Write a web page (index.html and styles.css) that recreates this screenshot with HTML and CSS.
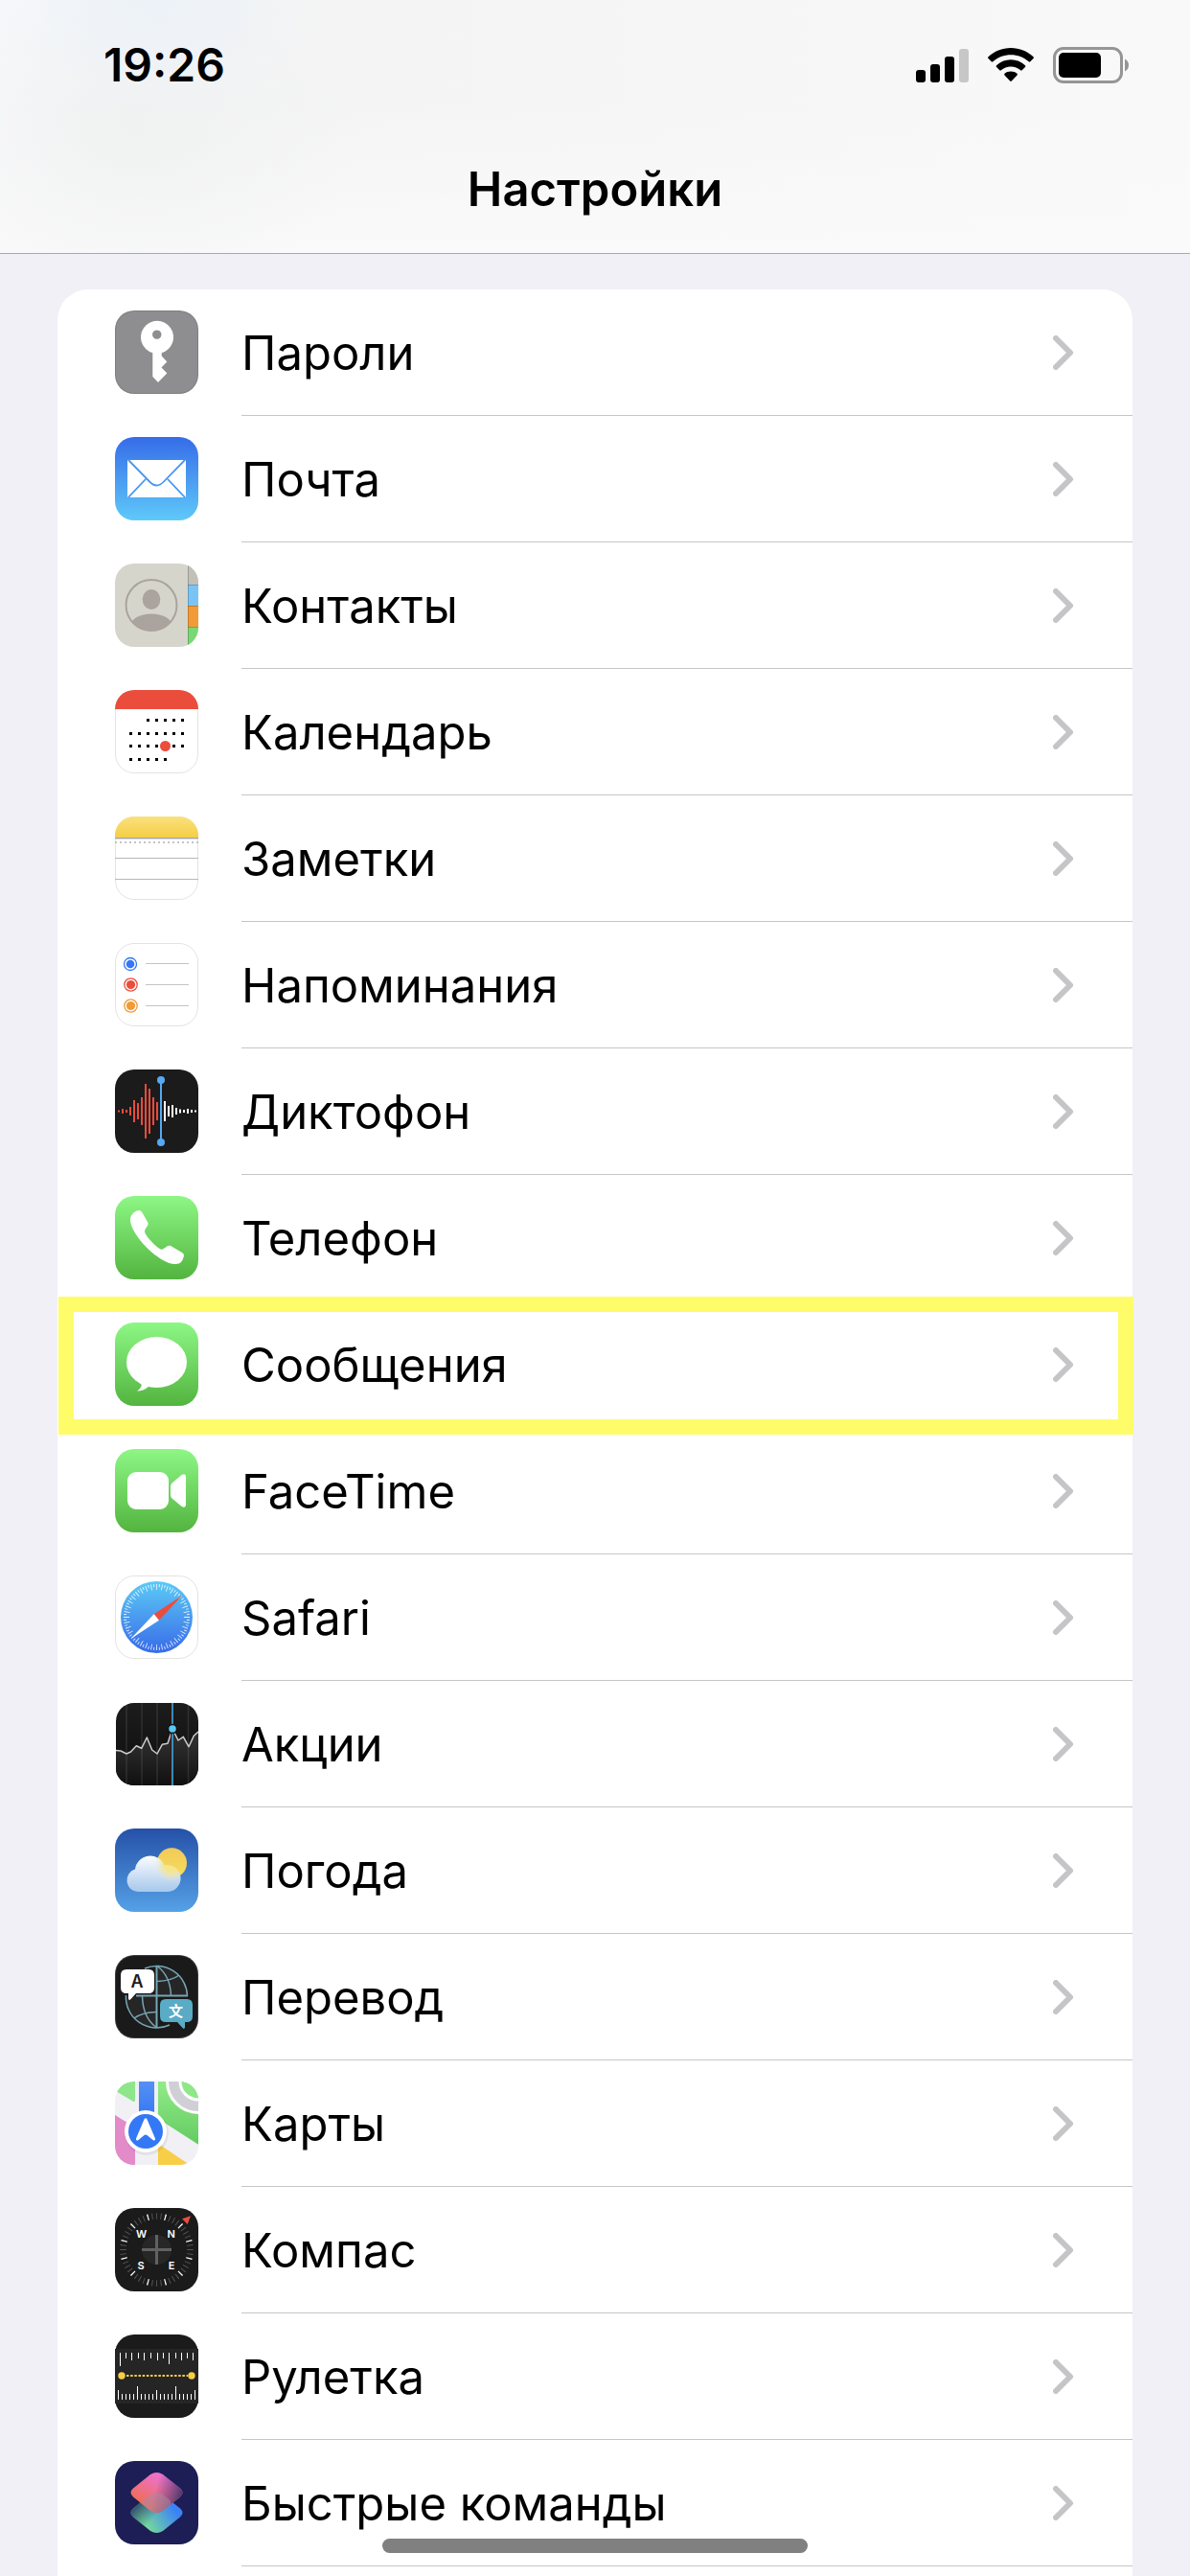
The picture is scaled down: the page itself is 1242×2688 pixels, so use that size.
FILE: index.html
```html
<!DOCTYPE html>
<html lang="ru">
<head>
<meta charset="utf-8">
<meta name="viewport" content="width=device-width, initial-scale=1">
<title>Настройки</title>
<link rel="stylesheet" href="styles.css">
</head>
<body>
<svg class="defs" aria-hidden="true">
  <defs>
    <linearGradient id="green" x2="0" y2="1"><stop stop-color="#8df785"/><stop offset="1" stop-color="#53b43f"/></linearGradient>
    <linearGradient id="mail" x2="0" y2="1"><stop stop-color="#366ce9"/><stop offset="1" stop-color="#5fc9f9"/></linearGradient>
    <linearGradient id="safari" x2="0" y2="1"><stop stop-color="#5ccaf6"/><stop offset="1" stop-color="#386be8"/></linearGradient>
    <linearGradient id="notes" x2="0" y2="1"><stop stop-color="#f9e17d"/><stop offset="1" stop-color="#f6ce45"/></linearGradient>
    <linearGradient id="stocks" x2="0" y2="1"><stop stop-color="#1c1c1c"/><stop offset="1" stop-color="#0d0d0d"/></linearGradient>
    <linearGradient id="stocks-area" x2="0" y2="1"><stop stop-color="#363636"/><stop offset="1" stop-color="#101010"/></linearGradient>
    <linearGradient id="sky" x2="0" y2="1"><stop stop-color="#2551a8"/><stop offset="1" stop-color="#55a1e6"/></linearGradient>
    <linearGradient id="sun" x2="0" y2="1"><stop stop-color="#f2c95a"/><stop offset="1" stop-color="#f6df5b"/></linearGradient>
    <linearGradient id="cloud" x2="0" y2="1"><stop stop-color="#fbfcff"/><stop offset="1" stop-color="#a7c8ec"/></linearGradient>
    <radialGradient id="glow" gradientUnits="userSpaceOnUse" cx="59" cy="38" r="18"><stop offset=".4" stop-color="#f5e58c"/><stop offset="1" stop-color="#e9e9c8" stop-opacity="0"/></radialGradient>
    <linearGradient id="park" x2="0" y2="1"><stop stop-color="#91ec88"/><stop offset="1" stop-color="#64cb62"/></linearGradient>
    <linearGradient id="road" x2="0" y2="1"><stop stop-color="#5590f3"/><stop offset="1" stop-color="#3376f5"/></linearGradient>
    <linearGradient id="short-a" gradientUnits="userSpaceOnUse" x1="30" y1="48" x2="50" y2="10"><stop stop-color="#ee6d50"/><stop offset="1" stop-color="#ee72e0"/></linearGradient>
    <linearGradient id="short-a2" gradientUnits="userSpaceOnUse" x1="42" y1="30" x2="70" y2="38"><stop stop-color="#5b3e75" stop-opacity="0"/><stop offset="1" stop-color="#4b3568"/></linearGradient>
    <linearGradient id="short-b" gradientUnits="userSpaceOnUse" x1="34" y1="68" x2="62" y2="50"><stop stop-color="#72d69f"/><stop offset="1" stop-color="#3b82f6"/></linearGradient>
    <linearGradient id="short-b2" gradientUnits="userSpaceOnUse" x1="20" y1="46" x2="38" y2="62"><stop stop-color="#2f4669"/><stop offset="1" stop-color="#2f4669" stop-opacity="0"/></linearGradient>
    <clipPath id="tile"><rect width="87" height="87" rx="20"/></clipPath>
    <clipPath id="avatar"><circle cx="38" cy="43.500" r="27"/></clipPath>
    <symbol id="chevron" viewBox="0 0 22 36"><path d="M3 3l15 15L3 33" fill="none" stroke="#c5c5c7" stroke-width="6" stroke-linecap="round" stroke-linejoin="round"/></symbol>
  </defs>
</svg>

<header class="header">
  <div class="status">
    <time class="clock">19:26</time>
    <div class="indicators">
      <svg width="55" height="35" viewBox="0 0 55 35" role="img" aria-label="Сигнал сети"><rect y="22" width="10" height="13" rx="3"/><rect x="15" y="16" width="10" height="19" rx="3"/><rect x="30" y="8" width="10" height="27" rx="3"/><rect x="45" width="10" height="35" rx="3" fill="#c7c7c7"/></svg>
      <svg width="48" height="36" viewBox="0 0 48 36" role="img" aria-label="Wi-Fi"><path d="M24 0C33 0 41.500 3.500 47.500 9.300Q48.300 10.200 47.500 11L44.300 14.300Q43.500 15 42.700 14.300C37.500 9.700 31 7.200 24 7.200S10.500 9.700 5.300 14.300Q4.500 15 3.700 14.300L.5 11Q-.3 10.200.5 9.300C6.500 3.500 15 0 24 0Z"/><path d="M24 12.300C29.800 12.300 35 14.600 39 18.300Q39.800 19.200 39 20L35.700 23.300Q35 24 34.200 23.300C31.400 21 27.900 19.500 24 19.500S16.600 21 13.800 23.300Q13 24 12.300 23.300L9 20Q8.200 19.200 9 18.300C13 14.600 18.200 12.300 24 12.300Z"/><path d="M24 24.500C26.500 24.500 28.800 25.400 30.500 26.800Q31.400 27.700 30.500 28.500L24.800 34.500Q24 35.300 23.200 34.500L17.500 28.500Q16.600 27.700 17.500 26.800C19.200 25.400 21.500 24.500 24 24.500Z"/></svg>
      <svg width="80" height="38" viewBox="0 0 80 38" role="img" aria-label="Батарея"><rect x="1.500" y="1.500" width="70" height="35" rx="9.500" fill="none" stroke="#959595" stroke-width="3"/><rect x="6" y="6" width="44" height="26" rx="5"/><path d="M75 12.500Q79 14.500 79 19T75 25.500Z" fill="#959595"/></svg>
    </div>
  </div>
  <h1 class="title">Настройки</h1>
</header>

<main class="content">
<ul class="list">
  <li class="row"><a href="#passwords" class="link">
    <svg class="icon" viewBox="0 0 87 87" aria-hidden="true"><rect width="87" height="87" rx="20" fill="#7f7f81"/><rect x="1" y="1" width="85" height="85" rx="19" fill="#8e8e90"/><path fill="#fff" fill-rule="evenodd" d="M39.300 44.200A17 17 0 1 1 48.700 44.200V47.500L54.300 53.500 48.500 59.500 54.300 65.500 45 75 39.300 69ZM43.700 20.400a4.700 4.700 0 1 0 .1 0Z"/></svg>
    <span class="body"><span class="label">Пароли</span><svg class="chevron" aria-hidden="true"><use href="#chevron"/></svg></span></a></li>
  <li class="row"><a href="#mail" class="link">
    <svg class="icon" viewBox="0 0 87 87" aria-hidden="true"><rect width="87" height="87" rx="20" fill="url(#mail)"/><rect x="13" y="24" width="61" height="39" rx="1" fill="#fff"/><path d="M14 24L36 46.500Q43.500 54.500 51 46.500L73 24M14 63L32 44M73 63L55 44" fill="none" stroke="#4798f1" stroke-width="1.800"/></svg>
    <span class="body"><span class="label">Почта</span><svg class="chevron" aria-hidden="true"><use href="#chevron"/></svg></span></a></li>
  <li class="row"><a href="#contacts" class="link">
    <svg class="icon" viewBox="0 0 87 87" aria-hidden="true"><g clip-path="url(#tile)"><rect width="87" height="87" fill="#d6d5cc"/><path fill="#c2c0b8" d="M76 0h11v22H76z"/><path fill="#7ac4f5" d="M76 22h11v22H76z"/><path fill="#f19a37" d="M76 44h11v22H76z"/><path fill="#78d974" d="M76 66h11v21H76z"/><path d="M76 22.500h11M76 44.500h11M76 66.500h11M76.500 0v87" stroke="#000" stroke-opacity=".2"/></g><circle cx="38" cy="43.500" r="26.500" fill="none" stroke="#aba39e" stroke-width="2"/><g fill="#aba39e"><ellipse cx="38" cy="37.500" rx="9.300" ry="10.500"/><ellipse cx="38" cy="64" rx="21" ry="11.500" clip-path="url(#avatar)"/></g></svg>
    <span class="body"><span class="label">Контакты</span><svg class="chevron" aria-hidden="true"><use href="#chevron"/></svg></span></a></li>
  <li class="row"><a href="#calendar" class="link">
    <svg class="icon" viewBox="0 0 87 87" aria-hidden="true"><rect x=".5" y=".5" width="86" height="86" rx="19.500" fill="#fff" stroke="#e3e3e3"/><path clip-path="url(#tile)" fill="#eb4d3d" d="M0 0h87v20H0z"/><path d="M33 31.500h39M15 45.500h57M15 58.500h57M15 72.500h39" stroke="#000" stroke-width="3" stroke-dasharray="3 6"/><circle cx="52.500" cy="58.500" r="5.500" fill="#eb4d3d"/></svg>
    <span class="body"><span class="label">Календарь</span><svg class="chevron" aria-hidden="true"><use href="#chevron"/></svg></span></a></li>
  <li class="row"><a href="#notes" class="link">
    <svg class="icon" viewBox="0 0 87 87" aria-hidden="true"><rect x=".5" y=".5" width="86" height="86" rx="19.500" fill="#fff" stroke="#e3e3e3"/><path clip-path="url(#tile)" fill="url(#notes)" d="M0 0h87v22H0z"/><path d="M0 22.500h87" stroke="#a3a3a3"/><path d="M0 23.500h87" stroke="#dcdcdc"/><path d="M0 43.500h87M0 65.500h87" stroke="#b8b8b8"/><path d="M0 27h87" stroke="#c4c4c4" stroke-width="2" stroke-dasharray="2 3"/></svg>
    <span class="body"><span class="label">Заметки</span><svg class="chevron" aria-hidden="true"><use href="#chevron"/></svg></span></a></li>
  <li class="row"><a href="#reminders" class="link">
    <svg class="icon" viewBox="0 0 87 87" aria-hidden="true"><rect x=".5" y=".5" width="86" height="86" rx="19.500" fill="#fff" stroke="#e3e3e3"/><path d="M32 21.500h45M32 43.500h45M32 65.500h45" stroke="#c4c4c4"/><g fill="none" stroke-width="1.300"><circle cx="16" cy="22" r="6.500" stroke="#3478f6"/><circle cx="16.500" cy="43.500" r="6.700" stroke="#eb4d3d"/><circle cx="16.500" cy="65.500" r="6.700" stroke="#f19a37"/></g><circle cx="16" cy="22" r="4.300" fill="#3478f6"/><circle cx="16.500" cy="43.500" r="4.600" fill="#eb4d3d"/><circle cx="16.500" cy="65.500" r="4.600" fill="#f19a37"/></svg>
    <span class="body"><span class="label">Напоминания</span><svg class="chevron" aria-hidden="true"><use href="#chevron"/></svg></span></a></li>
  <li class="row"><a href="#voice" class="link">
    <svg class="icon" viewBox="0 0 87 87" aria-hidden="true"><rect width="87" height="87" rx="20" fill="#1b1b1b"/><path stroke="#e94c3c" stroke-width="2" d="M4 42.500v2M8 41v5M12 42v3M16 39v9M20 32v23M24 35v17M28 29v29M32 15v57M36 20v47M40 29v29M44 34v19"/><path stroke="#fff" stroke-width="2" d="M52 33v21M56 38v11M60 37v13M64 40v7M68 41.500v4M72 42v3M76 41v5M80 42v3M84 42.500v2"/><path stroke="#55a9f3" stroke-width="2" d="M48 11v65"/><circle cx="48" cy="11" r="4" fill="#55a9f3"/><circle cx="48" cy="76" r="4" fill="#55a9f3"/></svg>
    <span class="body"><span class="label">Диктофон</span><svg class="chevron" aria-hidden="true"><use href="#chevron"/></svg></span></a></li>
  <li class="row"><a href="#phone" class="link">
    <svg class="icon" viewBox="0 0 87 87" aria-hidden="true"><rect width="87" height="87" rx="20" fill="url(#green)"/><path fill="#fff" d="M25 15C27 15 27.600 16 28.600 17.500L34.200 27.500C36 31 31.200 33 31 37C31.200 41 44 55 48.500 55.700C52 56 54.500 50.300 58.500 52.300L70 59C72.500 60.500 72.300 62.500 71 65.500C69 70.500 66 71 62.700 71C46 71 16 40 16 25C16 20 20 15.500 25 15Z"/></svg>
    <span class="body"><span class="label">Телефон</span><svg class="chevron" aria-hidden="true"><use href="#chevron"/></svg></span></a></li>
  <li class="row row-highlight"><a href="#messages" class="link">
    <svg class="icon" viewBox="0 0 87 87" aria-hidden="true"><rect width="87" height="87" rx="20" fill="url(#green)"/><g fill="#fff"><ellipse cx="43.500" cy="41.500" rx="31.500" ry="26.500"/><path d="M25 62Q29 64 27 67.500Q25.500 70 23 71.500Q29.500 71.500 34.500 67.200L40 66 32 58Z"/></g></svg>
    <span class="body"><span class="label">Сообщения</span><svg class="chevron" aria-hidden="true"><use href="#chevron"/></svg></span></a></li>
  <li class="row"><a href="#facetime" class="link">
    <svg class="icon" viewBox="0 0 87 87" aria-hidden="true"><rect width="87" height="87" rx="20" fill="url(#green)"/><g fill="#fff"><rect x="13" y="24" width="43" height="39" rx="9"/><path d="M58 39Q58 37 59.500 35.500L69 27.500Q74 24.500 74 29V58Q74 62.500 69 59.500L59.500 51.500Q58 50 58 48Z"/></g></svg>
    <span class="body"><span class="label">FaceTime</span><svg class="chevron" aria-hidden="true"><use href="#chevron"/></svg></span></a></li>
  <li class="row"><a href="#safari" class="link">
    <svg class="icon" viewBox="0 0 87 87" aria-hidden="true"><rect x=".5" y=".5" width="86" height="86" rx="19.500" fill="#fff" stroke="#e3e3e3"/><circle cx="43.500" cy="43.500" r="37.500" fill="url(#safari)"/><g fill="none" stroke="#fff" stroke-opacity=".85"><circle cx="43.500" cy="43.500" r="31.500" stroke-width="6" pathLength="360" stroke-dasharray="1.600 8.400" stroke-dashoffset=".8"/><circle cx="43.500" cy="43.500" r="33" stroke-width="3" pathLength="360" stroke-dasharray="1.600 8.400" stroke-dashoffset="5.800"/></g><path fill="#eb4d3d" d="M70.300 20.700L40.700 40.300 46 46.700Z"/><path fill="#fff" d="M16.500 66L40.700 40.300 46 46.700Z"/></svg>
    <span class="body"><span class="label">Safari</span><svg class="chevron" aria-hidden="true"><use href="#chevron"/></svg></span></a></li>
  <li class="row"><a href="#stocks" class="link">
    <svg class="icon" viewBox="0 0 87 87" aria-hidden="true"><rect x="1" y="1" width="86" height="86" rx="19" fill="url(#stocks)"/><g clip-path="url(#tile)"><path fill="url(#stocks-area)" d="M1 50.500L6 51 12 54 16.500 52 22.300 45.700 27.700 48.300 33.300 37 38.700 50 44 54 49.300 44.300 55 43.300 60 28 66 40 71.300 36.300 77 46.700 82.300 35.300 87 31V76Q87 87 70 87H18Q1 87 1 70Z"/><path d="M12 2v84M28 1v86M44 1v86M76.500 1v86" stroke="#fff" stroke-opacity=".1" stroke-width="1.500"/><path fill="none" stroke="#ccc" stroke-width="1.500" stroke-linejoin="round" d="M1 50.500L6 51 12 54 16.500 52 22.300 45.700 27.700 48.300 33.300 37 38.700 50 44 54 49.300 44.300 55 43.300 60 28 66 40 71.300 36.300 77 46.700 82.300 35.300 87 31"/><path d="M58.500 1v86" stroke="#3d120e"/><path d="M60 1v86" stroke="#3f9fd4" stroke-width="1.700"/></g><circle cx="60" cy="28" r="4.500" fill="#5ac8f5" stroke="#141414" stroke-width="1.500"/></svg>
    <span class="body"><span class="label">Акции</span><svg class="chevron" aria-hidden="true"><use href="#chevron"/></svg></span></a></li>
  <li class="row"><a href="#weather" class="link">
    <svg class="icon" viewBox="0 0 87 87" aria-hidden="true"><rect width="87" height="87" rx="20" fill="url(#sky)"/><circle cx="59.300" cy="36" r="15.700" fill="url(#sun)"/><path fill="url(#cloud)" d="M24 66A12 12 0 0 1 21 42.500A15.800 15.800 0 0 1 51.500 38.800A13.800 13.800 0 1 1 54 66Z"/><path fill="url(#glow)" d="M24 66A12 12 0 0 1 21 42.500A15.800 15.800 0 0 1 51.500 38.800A13.800 13.800 0 1 1 54 66Z"/></svg>
    <span class="body"><span class="label">Погода</span><svg class="chevron" aria-hidden="true"><use href="#chevron"/></svg></span></a></li>
  <li class="row"><a href="#translate" class="link">
    <svg class="icon" viewBox="0 0 87 87" aria-hidden="true"><rect width="87" height="87" rx="20" fill="#3a3a3a"/><rect x="1" y="1" width="85" height="85" rx="19" fill="#1a1a1a"/><path fill="#262626" d="M44 43V11.500A32 32 0 0 1 75.500 43ZM43 43.500V75.500A32 32 0 0 1 11.500 43.500Z"/><g fill="none" stroke="#76a5b3" stroke-width="1.500"><path d="M31 14A32 32 0 0 1 75.500 43M57 73A32 32 0 0 1 11.500 42M44 11.500Q58 22 58.500 43M43 75.500Q29 65 28.500 43M44 27.500Q59 27 67 21M43 59.500Q28 60 20 66"/><path d="M43.500 11v65M22 42.500h54" stroke-width="2"/></g><path fill="#fff" d="M12 15H35Q41 15 41 21V34Q41 40 35 40H22L16.500 46Q14.500 48 14 45.500V40H12Q6 40 6 34V21Q6 15 12 15Z"/><path fill="#5aabc5" d="M53 46H75Q81 46 81 52V64Q81 70 75 70H73V75.500Q72.500 78 70.500 76L65 70H53Q47 70 47 64V52Q47 46 53 46Z"/><text class="glyph glyph-latin" x="23" y="34">A</text><text class="glyph glyph-han" x="63.500" y="63.500">文</text></svg>
    <span class="body"><span class="label">Перевод</span><svg class="chevron" aria-hidden="true"><use href="#chevron"/></svg></span></a></li>
  <li class="row"><a href="#maps" class="link">
    <svg class="icon" viewBox="0 0 87 87" aria-hidden="true"><g clip-path="url(#tile)"><rect width="87" height="87" fill="#f0f0f5"/><path fill="#8fe589" d="M0 0H21V19Q21 22 18.500 20.500L0 9.500Z"/><path fill="#e38ac8" d="M0 35L21 48V87H0Z"/><path fill="url(#park)" d="M45 0H87V65.700L45 38.700Z"/><path fill="#f8ce46" d="M45 64.700L78 87H45Z"/><path fill="url(#road)" d="M25 0h16v40H25z"/><g stroke-width="3" stroke="#fff"><circle cx="87" cy="0" r="32.500" fill="#d0cfd6"/><circle cx="87" cy="0" r="19" fill="#8ee888"/></g><circle cx="33" cy="54" r="23" fill="#000" fill-opacity=".06"/></g><circle cx="32" cy="52" r="22" fill="#fff"/><circle cx="32" cy="52" r="18" fill="#3478f6"/><path fill="#fff" d="M30.500 39.500Q32 37 33.500 39.500L42 59.500Q42.300 62.500 39.500 61L33.500 56Q32 55 30.500 56L24.500 61Q21.700 62.500 22 59.500Z"/></svg>
    <span class="body"><span class="label">Карты</span><svg class="chevron" aria-hidden="true"><use href="#chevron"/></svg></span></a></li>
  <li class="row"><a href="#compass" class="link">
    <svg class="icon" viewBox="0 0 87 87" aria-hidden="true"><rect width="87" height="87" rx="20" fill="#1b1b1b"/><g fill="none" stroke-width="6.500"><circle cx="43.500" cy="43.500" r="35" stroke="#585858" pathLength="360" stroke-dasharray="1.500 6" stroke-dashoffset=".75"/><circle cx="43.500" cy="43.500" r="35" stroke="#fff" pathLength="360" stroke-dasharray="2 28" stroke-dashoffset="16"/></g><circle cx="43.500" cy="43.500" r="15.500" fill="#272727"/><path d="M43.500 28v31M28 43.500h31" stroke="#616161" stroke-width="3"/><path fill="#eb4d3d" d="M79 8.300L70 11.300 75.700 17Z"/><g class="glyph glyph-compass"><text x="27.500" y="31">W</text><text x="58.700" y="31">N</text><text x="27" y="64">S</text><text x="59" y="64">E</text></g></svg>
    <span class="body"><span class="label">Компас</span><svg class="chevron" aria-hidden="true"><use href="#chevron"/></svg></span></a></li>
  <li class="row"><a href="#measure" class="link">
    <svg class="icon" viewBox="0 0 87 87" aria-hidden="true"><rect width="87" height="87" rx="20" fill="#1b1b1b"/><path fill="#252525" d="M0 15h87v57H0z"/><path stroke="#fff" d="M5.500 19v14M11.500 19v6M17.500 19v8M24.500 19v6M30.500 19v8M37.500 19v6M44.500 19v8M50.500 19v6M56.500 19v12M63.500 19v6M69.500 19v8M75.500 19v6M81.500 19v8M3.500 58v10M7.500 62v6M11.500 62v6M15.500 62v6M19.500 62v6M23.500 54v14M27.500 62v6M31.500 62v6M35.500 62v6M39.500 62v6M43.500 58v10M47.500 62v6M51.500 62v6M55.500 62v6M59.500 62v6M63.500 54v14M67.500 62v6M71.500 62v6M75.500 62v6M79.500 62v6M83.500 58v10"/><path d="M12 43h64" stroke="#f8ce46" stroke-width="2" stroke-dasharray="2.500 1.670"/><circle cx="7" cy="43" r="3.700" fill="#f8ce46"/><circle cx="80" cy="43" r="3.700" fill="#f8ce46"/></svg>
    <span class="body"><span class="label">Рулетка</span><svg class="chevron" aria-hidden="true"><use href="#chevron"/></svg></span></a></li>
  <li class="row"><a href="#shortcuts" class="link">
    <svg class="icon" viewBox="0 0 87 87" aria-hidden="true"><rect width="87" height="87" rx="20" fill="#1c1e55"/><path fill="url(#short-b)" d="M37 35Q43.500 31 50 35L68 49.500Q73 54 68 58.500L50 73Q43.500 77 37 73L19 58.500Q14 54 19 49.500Z"/><path fill="url(#short-b2)" d="M37 35Q43.500 31 50 35L68 49.500Q73 54 68 58.500L50 73Q43.500 77 37 73L19 58.500Q14 54 19 49.500Z"/><path fill="url(#short-a)" d="M37 14Q43.500 10 50 14L68 28.500Q73 33 68 37.500L50 52Q43.500 56 37 52L19 37.500Q14 33 19 28.500Z"/><path fill="url(#short-a2)" d="M37 14Q43.500 10 50 14L68 28.500Q73 33 68 37.500L50 52Q43.500 56 37 52L19 37.500Q14 33 19 28.500Z"/><path fill="#a58aa8" fill-opacity=".5" d="M30 40.500L37 35Q43.500 31 50 35L57 40.500Q60 43.500 57 46.500L50 52Q43.500 56 37 52L30 46.500Q27 43.500 30 40.500Z"/></svg>
    <span class="body"><span class="label">Быстрые команды</span><svg class="chevron" aria-hidden="true"><use href="#chevron"/></svg></span></a></li>
</ul>
</main>
<div class="home-indicator"></div>
</body>
</html>
```

FILE: styles.css
```css
* {
  box-sizing: border-box;
}

body {
  display: flex;
  flex-direction: column;
  min-height: 100vh;
  margin: 0;
  background: #f1f0f6;
  color: #000;
  font-family: Inter, "Liberation Sans", sans-serif;
}

.defs {
  position: absolute;
  width: 0;
  height: 0;
}

.header {
  height: 265px;
  border-bottom: 1px solid #a9a9ad;
  background:
    radial-gradient(180px 120px at 160px 0, #ecf2f8, transparent),
    radial-gradient(240px 180px at 140px 130px, #f0f1f1, transparent),
    linear-gradient(to bottom, transparent 40%, #fafafa),
    linear-gradient(to right, #f9f9fc, #f4f4f4 25%, #f5f5f5 50%, #f9f9f9);
}

.status {
  display: flex;
  align-items: center;
  justify-content: space-between;
  height: 136px;
  padding: 0 63px 0 108px;
}

.clock {
  font-size: 48px;
  font-weight: 600;
  line-height: 60px;
}

.indicators {
  display: flex;
  align-items: center;
  gap: 20px;
}

.title {
  margin: 32px 0 0;
  font-size: 49px;
  font-weight: 600;
  line-height: 60px;
  text-align: center;
}

.content {
  display: flex;
  flex: 1;
  flex-direction: column;
  padding: 37px 60px 0;
}

.list {
  flex: 1;
  margin: 0;
  padding: 0;
  border-radius: 32px 32px 0 0;
  background: #fff;
  list-style: none;
}

.row {
  position: relative;
}

.link {
  display: flex;
  gap: 45px;
  height: 132px;
  padding-left: 60px;
  color: inherit;
  text-decoration: none;
}

.icon {
  flex: none;
  width: 87px;
  height: 87px;
  margin-top: 22px;
}

.body {
  display: flex;
  flex: 1;
  align-items: center;
  justify-content: space-between;
  padding: 1px 61px 0 0;
  border-bottom: 1px solid #c6c6c8;
}

.label {
  padding-top: 2px;
  font-size: 49px;
  line-height: 60px;
}

.chevron {
  width: 22px;
  height: 36px;
}

/* Callout frame drawn over the row and its neighbours' separators */
.row-highlight::after {
  position: absolute;
  inset: -5px -1px -7px 1px;
  border: 16px solid #fffc69;
  content: "";
  pointer-events: none;
}

.glyph {
  font-family: Inter, "Liberation Sans", sans-serif;
  font-weight: 600;
  text-anchor: middle;
}

.glyph-latin {
  fill: #1b1b1b;
  font-size: 18px;
}

.glyph-han {
  fill: #fff;
  font-family: "Noto Sans CJK SC", sans-serif;
  font-size: 15px;
  font-weight: 700;
}

.glyph-compass {
  fill: #fff;
  font-size: 11px;
}

.home-indicator {
  position: fixed;
  bottom: 24px;
  left: 50%;
  width: 444px;
  height: 15px;
  margin-left: -222px;
  border-radius: 8px;
  background: #808080;
}
```
